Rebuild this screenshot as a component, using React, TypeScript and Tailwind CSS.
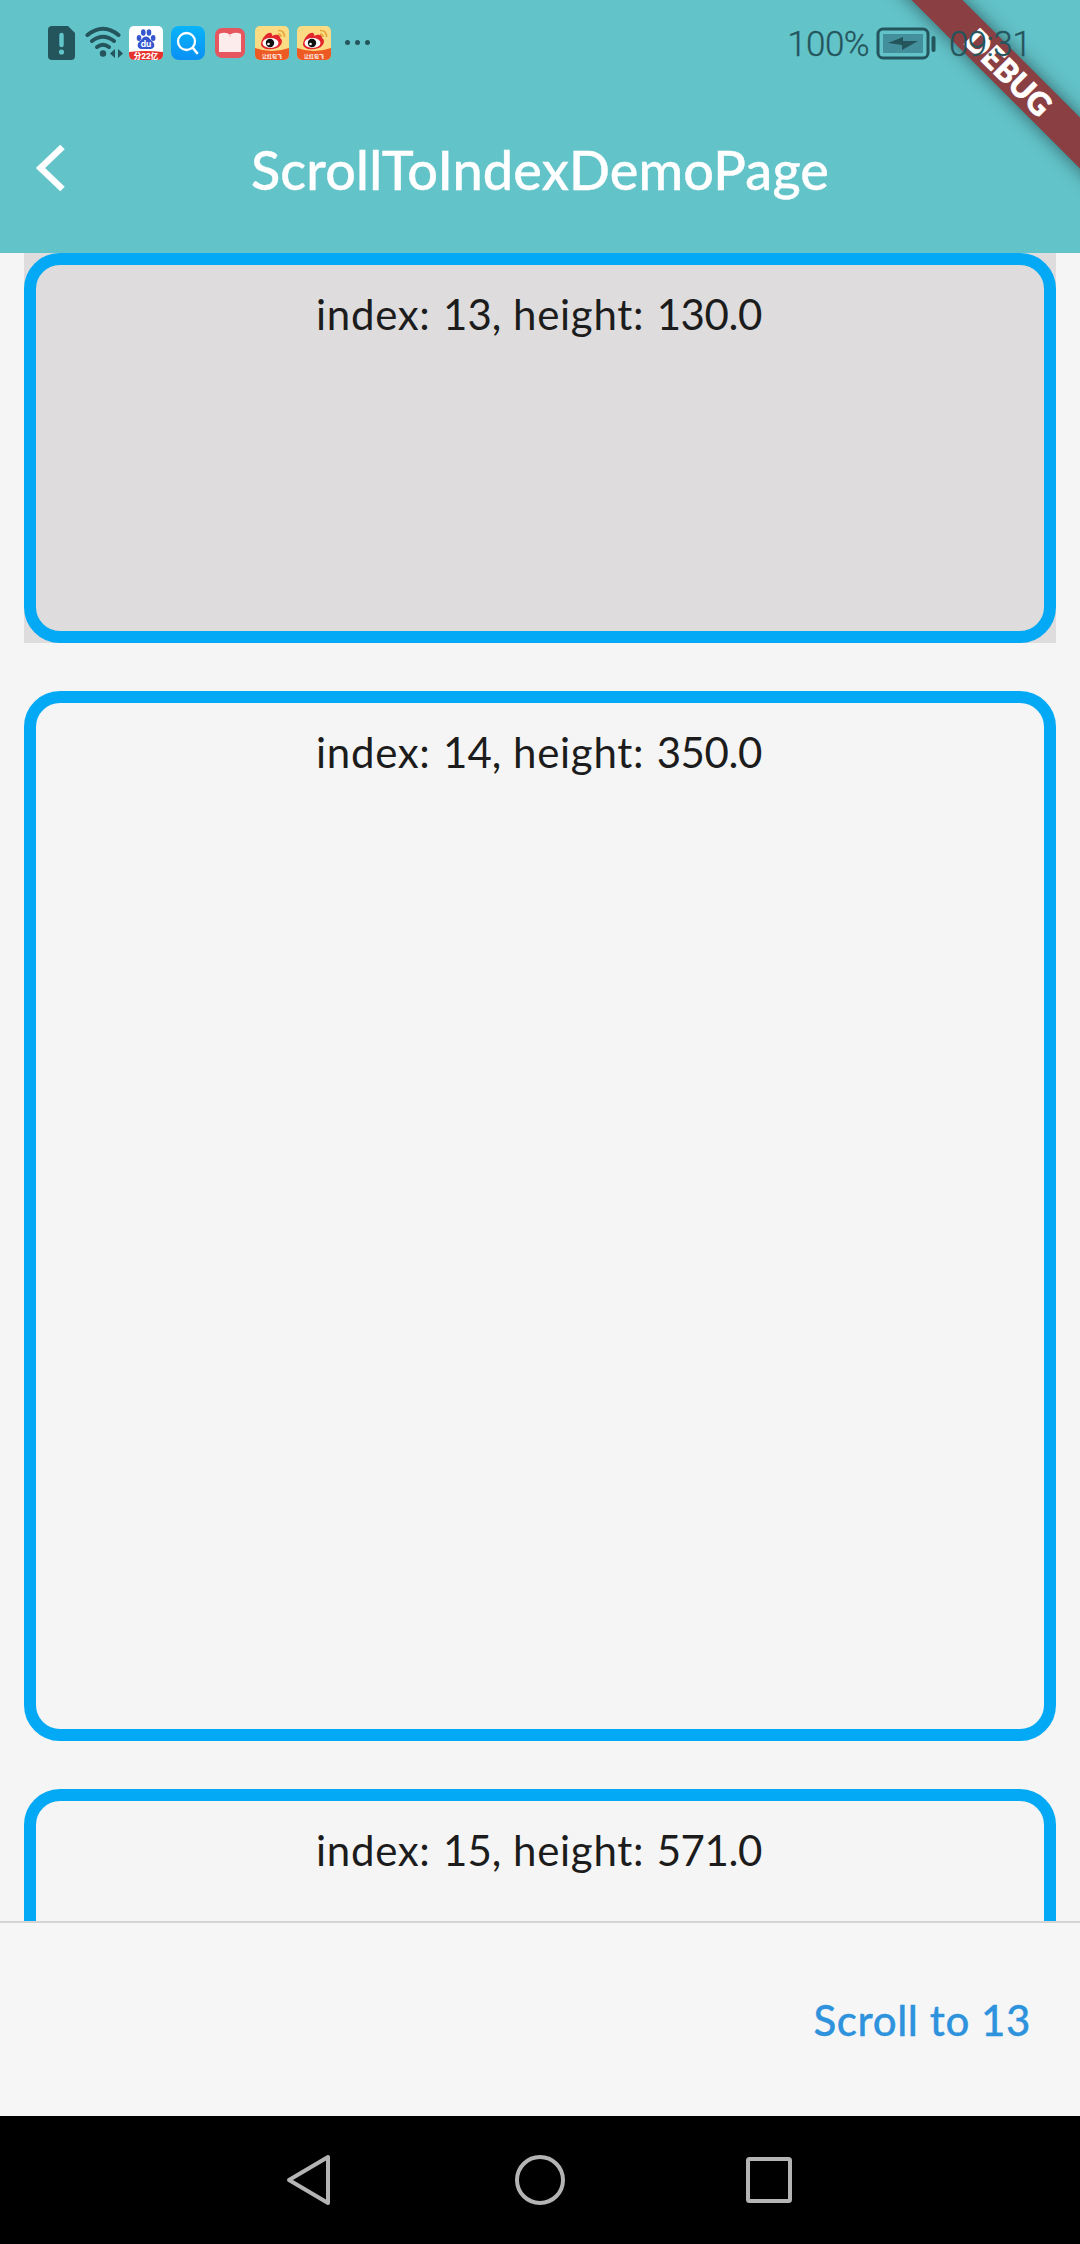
import React from "react";

const items = [
  { index: 13, height: "130.0", box: "h-[390px] bg-[#dedcdd]" },
  { index: 14, height: "350.0", box: "h-[1050px] bg-[#f5f5f5]" },
  { index: 15, height: "571.0", box: "h-[1713px] bg-[#f5f5f5]" },
];

function WeiboIcon() {
  return (
    <svg width="34" height="34" viewBox="0 0 34 34">
      <defs>
        <clipPath id="wb"><rect width="34" height="34" rx="5" /></clipPath>
      </defs>
      <g clipPath="url(#wb)">
        <rect width="34" height="34" fill="#fbdc84" />
        <path d="M0 22Q17 28 34 22V34H0Z" fill="#ee5a24" />
        <path d="M6 18C7 11 13 6 16 7C18 8 17 10 17 10C21 8 25 8 25 12C29 14 27 22 18 23C11 24 6 22 6 18Z" fill="#e2262c" />
        <ellipse cx="15.500" cy="17" rx="8" ry="5" fill="#fff" />
        <circle cx="15" cy="17" r="4.200" fill="#111" />
        <circle cx="13.500" cy="18" r="1.300" fill="#fff" />
        <path d="M23 4.500Q29.500 4 29.500 11M23 8Q26 8 26 11" fill="none" stroke="#e9a53a" strokeWidth="1.600" />
      </g>
      <text x="17" y="32" textAnchor="middle" fontSize="5" fontWeight="700" fill="#fff" fontFamily="Noto Sans CJK SC, sans-serif">让红包飞</text>
    </svg>
  );
}

function StatusBar() {
  return (
    <div className="flex h-[85px] items-center pl-[48px] pr-[50px] text-[#24545c]">
      <svg className="mr-[10px]" width="27" height="34" viewBox="0 0 27 34">
        <path d="M4 0H20L27 7V30Q27 34 23 34H4Q0 34 0 30V4Q0 0 4 0Z" fill="#24545c" />
        <path d="M13.500 9V19" stroke="#62c3c9" strokeWidth="4.500" strokeLinecap="round" />
        <circle cx="13.500" cy="26" r="2.600" fill="#62c3c9" />
      </svg>
      <svg className="mr-[6px]" width="38" height="34" viewBox="0 0 38 34">
        <g fill="none" stroke="#24545c" strokeWidth="4" strokeLinecap="round">
          <path d="M2.500 9Q18 -3.500 33.500 9" />
          <path d="M7 15Q18 6.500 29 15" />
          <path d="M12 21Q18 16.500 24 21" />
        </g>
        <circle cx="18" cy="27.500" r="3.200" fill="#24545c" />
        <path d="M30 23V32L25 27.500ZM33 23V32L38 27.500Z" fill="#24545c" />
      </svg>
      <svg className="mr-[8px]" width="34" height="34" viewBox="0 0 34 34">
        <defs><clipPath id="bd"><rect width="34" height="34" rx="5" /></clipPath></defs>
        <g clipPath="url(#bd)">
          <rect width="34" height="34" fill="#fff" />
          <path d="M0 26Q17 24 34 26V34H0Z" fill="#e5322d" />
        </g>
        <g fill="#3556cf">
          <ellipse cx="10" cy="12" rx="2.300" ry="3" />
          <ellipse cx="14.300" cy="6.500" rx="2.300" ry="3.200" />
          <ellipse cx="20" cy="6.500" rx="2.300" ry="3.200" />
          <ellipse cx="24.200" cy="12" rx="2.300" ry="3" />
          <path d="M17 10.500C20 10.500 21 13.500 23.500 15.500C27 19 25 23.500 21 23H13C9 23.500 7 19 10.500 15.500C13 13.500 14 10.500 17 10.500Z" />
        </g>
        <text x="17" y="21" textAnchor="middle" fontSize="8.500" fontWeight="700" fill="#fff" fontFamily="Inter, sans-serif">du</text>
        <text x="17" y="33" textAnchor="middle" fontSize="7.500" fontWeight="800" fill="#fff" fontFamily="Inter, Noto Sans CJK SC, sans-serif">分22亿</text>
      </svg>
      <svg className="mr-[10px]" width="34" height="34" viewBox="0 0 34 34">
        <defs><linearGradient id="sg" x1="0" y1="0" x2="0" y2="1"><stop stopColor="#08b4f8" /><stop offset="1" stopColor="#0a90f4" /></linearGradient></defs>
        <rect width="34" height="34" rx="8" fill="url(#sg)" />
        <circle cx="15.500" cy="15.500" r="8.500" fill="none" stroke="#fff" strokeWidth="2.300" />
        <path d="M22 22L26 27" stroke="#fff" strokeWidth="2.600" strokeLinecap="round" />
      </svg>
      <svg className="mr-[10px]" width="30" height="30" viewBox="0 0 30 30">
        <rect width="30" height="30" rx="7" fill="#e5565f" />
        <path d="M4 6Q10 3.500 15 6.500Q20 3.500 26 6V24H4Z" fill="#fdecec" />
        <path d="M15 6V9" stroke="#f3b3b6" strokeWidth="1" />
      </svg>
      <div className="mr-[14px] flex gap-[8px]"><WeiboIcon /><WeiboIcon /></div>
      <div className="flex gap-[5px]">
        <i className="h-[5px] w-[5px] rounded-full bg-[#24545c]" />
        <i className="h-[5px] w-[5px] rounded-full bg-[#24545c]" />
        <i className="h-[5px] w-[5px] rounded-full bg-[#24545c]" />
      </div>
    </div>
  );
}

export default function App() {
  return (
    <div className="relative flex h-[2244px] w-[1080px] flex-col overflow-hidden bg-[#f5f5f5] font-['Lato',sans-serif] text-[#1c1c1c]">
      <header className="h-[253px] shrink-0 bg-[#62c3c9]">
        <StatusBar />
        <div className="relative flex h-[168px] items-center justify-center">
          <svg className="absolute left-[35px] top-[58px]" width="32" height="50" viewBox="0 0 32 50">
            <path d="M27.500 4L5.500 25L27.500 46" fill="none" stroke="#fff" strokeWidth="6.500" />
          </svg>
          <h1 className="whitespace-nowrap text-[54px] font-medium tracking-[0.15px] text-white [-webkit-text-stroke:0.4px_white]">ScrollToIndexDemoPage</h1>
        </div>
      </header>

      <main className="flex min-h-0 flex-1 flex-col gap-[48px] overflow-hidden px-[24px]">
        {items.map((item) => (
          <section key={item.index} className={`shrink-0 ${item.box}`}>
            <div className="h-full rounded-[36px] border-[12px] border-[#03a9f4] pr-[2px] pt-[24px] text-center text-[42px] leading-[50px] [word-spacing:1px]">
              <span className="tracking-[0.7px]">index: </span>{item.index}, <span className="tracking-[0.7px]">height: </span><span className="tracking-[-0.4px]">{item.height}</span>
            </div>
          </section>
        ))}
      </main>

      <footer className="flex h-[195px] shrink-0 items-center justify-end border-t-2 border-[#d4d4d5] bg-[#f6f6f7] pr-[49px] pt-[2px] text-[42px] font-medium tracking-[0.6px] text-[#2e93dc] [-webkit-text-stroke:0.3px_#2e93dc] [word-spacing:2px]">
        <button>Scroll to 13</button>
      </footer>

      <nav className="flex h-[128px] shrink-0 items-center bg-black">
        <svg className="ml-[284px]" width="50" height="54" viewBox="0 0 50 54">
          <path d="M44 4V50L5 27Z" fill="none" stroke="#b4b4b4" strokeWidth="4" strokeLinejoin="round" />
        </svg>
        <svg className="ml-[179px]" width="54" height="54" viewBox="0 0 54 54">
          <circle cx="27" cy="27" r="23" fill="none" stroke="#b4b4b4" strokeWidth="4" />
        </svg>
        <svg className="ml-[175px]" width="54" height="54" viewBox="0 0 54 54">
          <rect x="6" y="6" width="42" height="42" rx="1.500" fill="none" stroke="#b4b4b4" strokeWidth="4" />
        </svg>
      </nav>

      <div className="absolute left-[858px] top-[53px] flex h-[36px] w-[300px] rotate-45 items-center justify-center bg-[#8a3f42] pl-[3px] text-[31px] font-black leading-none text-white shadow-[0_0_18px_rgba(0,0,0,0.5)] [-webkit-text-stroke:0.8px_white]">
        DEBUG
      </div>
      <div className="absolute right-[49px] top-[24px] flex h-[42px] items-center font-['Roboto'] text-[35px] font-light tracking-[-0.6px] text-[#24545c] [-webkit-text-stroke:0.3px_#24545c]">
        <span>100%</span>
        <svg className="mb-[2px] ml-[7px] mr-[11px]" width="62" height="34" viewBox="0 0 62 34">
          <rect x="2" y="2" width="50" height="29" rx="5" fill="none" stroke="#24545c" strokeWidth="3" />
          <rect x="7" y="7" width="40" height="19" fill="#438f9b" />
          <path d="M12 16L27 10V14H42L26 23V18Z" fill="#24545c" />
          <path d="M57.500 11V23" stroke="#24545c" strokeWidth="4" strokeLinecap="round" />
        </svg>
        <span>09:31</span>
      </div>
    </div>
  );
}
